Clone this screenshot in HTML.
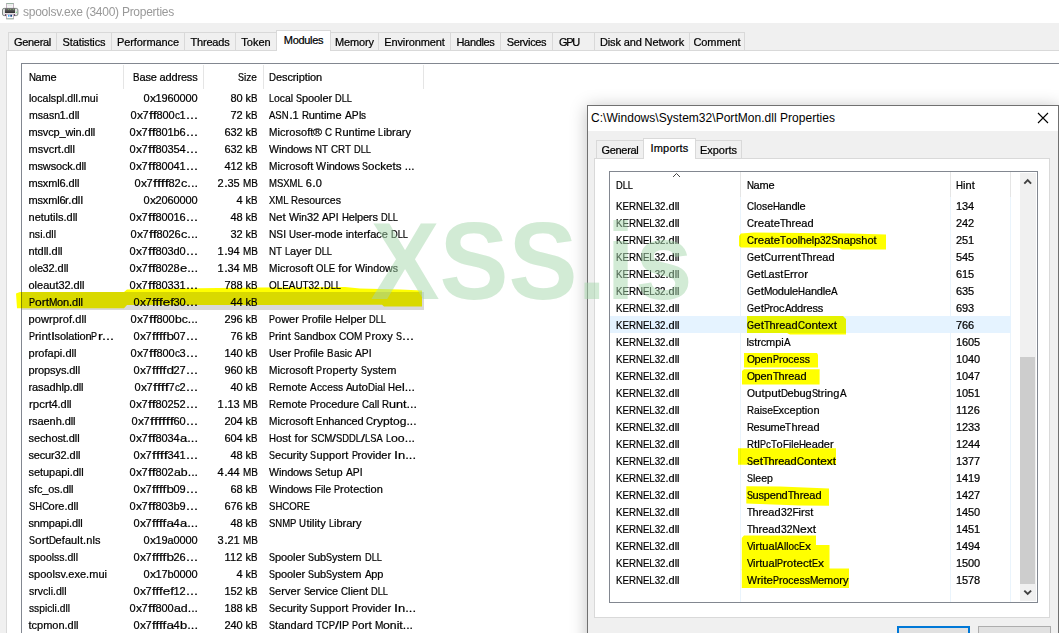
<!DOCTYPE html>
<html lang="en"><head><meta charset="utf-8"><title>spoolsv.exe (3400) Properties</title>
<style>

html,body{margin:0;padding:0}
body{width:1059px;height:633px;overflow:hidden;position:relative;background:#f0f0f0;font-family:"Liberation Sans",sans-serif;font-size:11px;color:#000;}
.a{position:absolute;white-space:nowrap}
.t{position:absolute;white-space:pre;line-height:17px;height:17px;letter-spacing:-0.2px;-webkit-text-stroke:0.22px #000}
.x{display:inline-block;transform-origin:0 50%;white-space:pre;letter-spacing:0}
.tab{position:absolute;box-sizing:border-box;border:1px solid #d9d9d9;border-bottom:none;background:#f0f0f0;text-align:center;white-space:nowrap;letter-spacing:-0.15px;-webkit-text-stroke:0.22px #000}
.tab.sel{background:#fff;z-index:3}
.hd{position:absolute;width:1px;background:#e5e5e5}

</style></head><body>
<div class="a" style="left:0;top:0;width:1059px;height:23px;background:#fff"></div>
<svg class="a" style="left:2px;top:3px" width="17" height="17" viewBox="0 0 17 17">
<defs><linearGradient id="pb" x1="0" y1="0" x2="0" y2="1"><stop offset="0" stop-color="#7a7a7a"/><stop offset="0.45" stop-color="#555"/><stop offset="1" stop-color="#2e2e2e"/></linearGradient></defs>
<rect x="4.4" y="0.6" width="7.2" height="5.4" fill="#f6f6f6" stroke="#b9a3b6" stroke-width="0.8"/>
<path d="M4.4 0.6 H11.6" stroke="#8db59a" stroke-width="0.8"/>
<path d="M5.8 2.4 H10" stroke="#e2e2e2" stroke-width="0.7"/>
<rect x="0.5" y="5.4" width="15.4" height="7.2" rx="1.6" fill="#e6e6e6" stroke="#77807b" stroke-width="0.9"/>
<rect x="2.9" y="5.1" width="10.1" height="5.1" fill="url(#pb)"/>
<rect x="2.9" y="10.2" width="10.1" height="1" fill="#fafafa"/>
<rect x="6.0" y="6.0" width="0.9" height="0.9" fill="#86c066" opacity="0.85"/><rect x="8.1" y="6.0" width="0.9" height="0.9" fill="#86c066" opacity="0.85"/><rect x="11.1" y="6.0" width="0.9" height="0.9" fill="#86c066" opacity="0.85"/>
<rect x="13.9" y="8.8" width="1.1" height="1.1" fill="#7fe07f"/>
<rect x="4.4" y="11.2" width="7.2" height="4.6" fill="#fff" stroke="#b9a3b6" stroke-width="0.8"/>
<path d="M4.4 15.8 H11.6" stroke="#8db59a" stroke-width="0.8"/>
<rect x="6.0" y="11.8" width="1.5" height="1.9" fill="#3da0f0"/><rect x="8.3" y="11.8" width="1.8" height="1.9" fill="#123f78"/>
<rect x="3.2" y="11.2" width="0.8" height="1.4" fill="#300030"/><rect x="12" y="11.2" width="0.8" height="1.4" fill="#300030"/>
</svg>
<div class="a" style="left:23px;top:4px;font-size:12px;line-height:16px;color:#999;letter-spacing:-0.26px">spoolsv.exe (3400) Properties</div>
<div class="a" style="left:6px;top:50px;width:1100px;height:700px;box-sizing:border-box;border:1px solid #d9d9d9;background:#fff"></div>
<div class="tab" style="left:8px;top:32px;width:49px;height:18px;line-height:18px;letter-spacing:-0.306px">General</div>
<div class="tab" style="left:56px;top:32px;width:56px;height:18px;line-height:18px;letter-spacing:-0.102px">Statistics</div>
<div class="tab" style="left:111px;top:32px;width:74px;height:18px;line-height:18px;letter-spacing:-0.089px">Performance</div>
<div class="tab" style="left:184px;top:32px;width:52px;height:18px;line-height:18px;letter-spacing:-0.194px">Threads</div>
<div class="tab" style="left:235px;top:32px;width:42px;height:18px;line-height:18px;letter-spacing:0.028px">Token</div>
<div class="tab sel" style="left:276px;top:30px;width:55px;height:21px;line-height:19px;letter-spacing:-0.311px">Modules</div>
<div class="tab" style="left:330px;top:32px;width:49px;height:18px;line-height:18px;letter-spacing:-0.139px">Memory</div>
<div class="tab" style="left:378px;top:32px;width:73px;height:18px;line-height:18px;letter-spacing:-0.115px">Environment</div>
<div class="tab" style="left:450px;top:32px;width:51px;height:18px;line-height:18px;letter-spacing:-0.337px">Handles</div>
<div class="tab" style="left:500px;top:32px;width:53px;height:18px;line-height:18px;letter-spacing:-0.336px">Services</div>
<div class="tab" style="left:552px;top:32px;width:43px;height:18px;line-height:18px;text-align:left;padding-left:6px;letter-spacing:-1.281px">GPU</div>
<div class="tab" style="left:594px;top:32px;width:96px;height:18px;line-height:18px;letter-spacing:-0.138px">Disk and Network</div>
<div class="tab" style="left:689px;top:32px;width:56px;height:18px;line-height:18px;letter-spacing:-0.098px">Comment</div>
<div class="a" style="left:21px;top:63px;width:1100px;height:700px;box-sizing:border-box;border:1px solid #828790;background:#fff"></div>
<div class="hd" style="left:123px;top:65px;height:24px"></div>
<div class="hd" style="left:203px;top:65px;height:24px"></div>
<div class="hd" style="left:263px;top:65px;height:24px"></div>
<div class="hd" style="left:423px;top:65px;height:24px"></div>
<div class="t" style="left:28.5px;top:69px;"><span class="x" style="transform:scaleX(0.880);margin-right:-0.95px">N</span><span style="letter-spacing:-0.14px">ame</span></div>
<div class="t" style="right:861.5px;top:69px;"><span class="x" style="transform:scaleX(0.885);margin-right:-0.84px">B</span><span style="letter-spacing:-0.18px">ase address</span></div>
<div class="t" style="right:801.5px;top:69px;"><span class="x" style="transform:scaleX(0.817);margin-right:-1.34px">S</span><span class="x" style="transform:scaleX(0.924);margin-right:-1.06px">ize</span></div>
<div class="t" style="left:269px;top:69px;"><span class="x" style="transform:scaleX(0.880);margin-right:-0.95px">D</span><span style="letter-spacing:-0.11px">escription</span></div>
<div class="t" style="left:28.5px;top:90px;"><span class="x" style="transform:scaleX(0.965);margin-right:-2.53px">localspl.dll.mui</span></div>
<div class="t" style="right:861.5px;top:90px;"><span style="letter-spacing:-0.12px">0</span><span class="x" style="transform:scaleX(1.091);margin-right:0.50px">x</span><span style="letter-spacing:-0.12px">1960000</span></div>
<div class="t" style="right:801.5px;top:90px;"><span style="letter-spacing:-0.12px">80</span><span style="letter-spacing:-0.03px"> k</span><span class="x" style="transform:scaleX(0.885);margin-right:-0.84px">B</span></div>
<div class="t" style="left:269px;top:90px;"><span class="x" style="transform:scaleX(0.816);margin-right:-1.12px">L</span><span class="x" style="transform:scaleX(0.946);margin-right:-1.25px">ocal </span><span class="x" style="transform:scaleX(0.817);margin-right:-1.34px">S</span><span style="letter-spacing:-0.09px">pooler </span><span class="x" style="transform:scaleX(0.842);margin-right:-3.19px">DLL</span></div>
<div class="t" style="left:28.5px;top:107px;"><span class="x" style="transform:scaleX(0.957);margin-right:-1.41px">msasn</span><span style="letter-spacing:-0.12px">1</span><span style="letter-spacing:-0.02px">.dll</span></div>
<div class="t" style="right:861.5px;top:107px;"><span style="letter-spacing:-0.12px">0</span><span class="x" style="transform:scaleX(1.091);margin-right:0.50px">x</span><span style="letter-spacing:-0.12px">7</span><span class="x" style="transform:scaleX(1.351);margin-right:2.08px">ff</span><span style="letter-spacing:-0.12px">800</span><span class="x" style="transform:scaleX(0.909);margin-right:-0.50px">c</span><span style="letter-spacing:-0.12px">1</span><span class="x" style="transform:scaleX(1.308);margin-right:2.83px">...</span></div>
<div class="t" style="right:801.5px;top:107px;"><span style="letter-spacing:-0.12px">72</span><span style="letter-spacing:-0.03px"> k</span><span class="x" style="transform:scaleX(0.885);margin-right:-0.84px">B</span></div>
<div class="t" style="left:269px;top:107px;"><span class="x" style="transform:scaleX(0.866);margin-right:-3.02px">ASN</span><span class="x" style="transform:scaleX(1.306);margin-right:0.94px">.</span><span style="letter-spacing:-0.12px">1</span><span style="letter-spacing:-0.06px"> </span><span class="x" style="transform:scaleX(0.880);margin-right:-0.95px">R</span><span style="letter-spacing:-0.01px">untime </span><span class="x" style="transform:scaleX(0.936);margin-right:-1.13px">API</span><span class="x" style="transform:scaleX(0.909);margin-right:-0.50px">s</span></div>
<div class="t" style="left:28.5px;top:124px;"><span style="letter-spacing:-0.15px">msvcp_win.dll</span></div>
<div class="t" style="right:861.5px;top:124px;"><span style="letter-spacing:-0.12px">0</span><span class="x" style="transform:scaleX(1.091);margin-right:0.50px">x</span><span style="letter-spacing:-0.12px">7</span><span class="x" style="transform:scaleX(1.351);margin-right:2.08px">ff</span><span style="letter-spacing:-0.12px">801</span><span style="letter-spacing:-0.12px">b</span><span style="letter-spacing:-0.12px">6</span><span class="x" style="transform:scaleX(1.308);margin-right:2.83px">...</span></div>
<div class="t" style="right:801.5px;top:124px;"><span style="letter-spacing:-0.12px">632</span><span style="letter-spacing:-0.03px"> k</span><span class="x" style="transform:scaleX(0.885);margin-right:-0.84px">B</span></div>
<div class="t" style="left:269px;top:124px;"><span class="x" style="transform:scaleX(0.916);margin-right:-0.77px">M</span><span style="letter-spacing:0.07px">icrosoft</span><span class="x" style="transform:scaleX(1.110);margin-right:0.89px">®</span><span style="letter-spacing:-0.06px"> </span><span class="x" style="transform:scaleX(0.880);margin-right:-0.95px">C</span><span style="letter-spacing:-0.06px"> </span><span class="x" style="transform:scaleX(0.880);margin-right:-0.95px">R</span><span style="letter-spacing:-0.01px">untime </span><span class="x" style="transform:scaleX(0.816);margin-right:-1.12px">L</span><span style="letter-spacing:-0.00px">ibrary</span></div>
<div class="t" style="left:28.5px;top:141px;"><span style="letter-spacing:0.00px">msvcrt.dll</span></div>
<div class="t" style="right:861.5px;top:141px;"><span style="letter-spacing:-0.12px">0</span><span class="x" style="transform:scaleX(1.091);margin-right:0.50px">x</span><span style="letter-spacing:-0.12px">7</span><span class="x" style="transform:scaleX(1.351);margin-right:2.08px">ff</span><span style="letter-spacing:-0.12px">80354</span><span class="x" style="transform:scaleX(1.308);margin-right:2.83px">...</span></div>
<div class="t" style="right:801.5px;top:141px;"><span style="letter-spacing:-0.12px">632</span><span style="letter-spacing:-0.03px"> k</span><span class="x" style="transform:scaleX(0.885);margin-right:-0.84px">B</span></div>
<div class="t" style="left:269px;top:141px;"><span class="x" style="transform:scaleX(0.962);margin-right:-0.39px">W</span><span style="letter-spacing:-0.19px">indows </span><span class="x" style="transform:scaleX(0.886);margin-right:-1.67px">NT</span><span style="letter-spacing:-0.06px"> </span><span class="x" style="transform:scaleX(0.892);margin-right:-2.42px">CRT</span><span style="letter-spacing:-0.06px"> </span><span class="x" style="transform:scaleX(0.842);margin-right:-3.19px">DLL</span></div>
<div class="t" style="left:28.5px;top:158px;"><span style="letter-spacing:-0.16px">mswsock.dll</span></div>
<div class="t" style="right:861.5px;top:158px;"><span style="letter-spacing:-0.12px">0</span><span class="x" style="transform:scaleX(1.091);margin-right:0.50px">x</span><span style="letter-spacing:-0.12px">7</span><span class="x" style="transform:scaleX(1.351);margin-right:2.08px">ff</span><span style="letter-spacing:-0.12px">80041</span><span class="x" style="transform:scaleX(1.308);margin-right:2.83px">...</span></div>
<div class="t" style="right:801.5px;top:158px;"><span style="letter-spacing:-0.12px">412</span><span style="letter-spacing:-0.03px"> k</span><span class="x" style="transform:scaleX(0.885);margin-right:-0.84px">B</span></div>
<div class="t" style="left:269px;top:158px;"><span class="x" style="transform:scaleX(0.916);margin-right:-0.77px">M</span><span style="letter-spacing:0.05px">icrosoft </span><span class="x" style="transform:scaleX(0.962);margin-right:-0.39px">W</span><span style="letter-spacing:-0.19px">indows </span><span class="x" style="transform:scaleX(0.817);margin-right:-1.34px">S</span><span class="x" style="transform:scaleX(1.056);margin-right:2.47px">ockets ...</span></div>
<div class="t" style="left:28.5px;top:175px;"><span style="letter-spacing:-0.16px">msxml</span><span style="letter-spacing:-0.12px">6</span><span style="letter-spacing:-0.02px">.dll</span></div>
<div class="t" style="right:861.5px;top:175px;"><span style="letter-spacing:-0.12px">0</span><span class="x" style="transform:scaleX(1.091);margin-right:0.50px">x</span><span style="letter-spacing:-0.12px">7</span><span class="x" style="transform:scaleX(1.374);margin-right:4.36px">ffff</span><span style="letter-spacing:-0.12px">82</span><span class="x" style="transform:scaleX(1.159);margin-right:2.33px">c...</span></div>
<div class="t" style="right:801.5px;top:175px;"><span style="letter-spacing:-0.12px">2</span><span class="x" style="transform:scaleX(1.306);margin-right:0.94px">.</span><span style="letter-spacing:-0.12px">35</span><span style="letter-spacing:-0.06px"> </span><span class="x" style="transform:scaleX(0.903);margin-right:-1.60px">MB</span></div>
<div class="t" style="left:269px;top:175px;"><span class="x" style="transform:scaleX(0.864);margin-right:-5.33px">MSXML</span><span style="letter-spacing:-0.06px"> </span><span style="letter-spacing:-0.12px">6</span><span class="x" style="transform:scaleX(1.306);margin-right:0.94px">.</span><span style="letter-spacing:-0.12px">0</span></div>
<div class="t" style="left:28.5px;top:192px;"><span style="letter-spacing:-0.16px">msxml</span><span style="letter-spacing:-0.12px">6</span><span class="x" style="transform:scaleX(1.051);margin-right:0.88px">r.dll</span></div>
<div class="t" style="right:861.5px;top:192px;"><span style="letter-spacing:-0.12px">0</span><span class="x" style="transform:scaleX(1.091);margin-right:0.50px">x</span><span style="letter-spacing:-0.12px">2060000</span></div>
<div class="t" style="right:801.5px;top:192px;"><span style="letter-spacing:-0.12px">4</span><span style="letter-spacing:-0.03px"> k</span><span class="x" style="transform:scaleX(0.885);margin-right:-0.84px">B</span></div>
<div class="t" style="left:269px;top:192px;"><span class="x" style="transform:scaleX(0.857);margin-right:-3.23px">XML</span><span style="letter-spacing:-0.06px"> </span><span class="x" style="transform:scaleX(0.880);margin-right:-0.95px">R</span><span class="x" style="transform:scaleX(0.963);margin-right:-1.64px">esources</span></div>
<div class="t" style="left:28.5px;top:209px;"><span style="letter-spacing:0.01px">netutils.dll</span></div>
<div class="t" style="right:861.5px;top:209px;"><span style="letter-spacing:-0.12px">0</span><span class="x" style="transform:scaleX(1.091);margin-right:0.50px">x</span><span style="letter-spacing:-0.12px">7</span><span class="x" style="transform:scaleX(1.351);margin-right:2.08px">ff</span><span style="letter-spacing:-0.12px">80016</span><span class="x" style="transform:scaleX(1.308);margin-right:2.83px">...</span></div>
<div class="t" style="right:801.5px;top:209px;"><span style="letter-spacing:-0.12px">48</span><span style="letter-spacing:-0.03px"> k</span><span class="x" style="transform:scaleX(0.885);margin-right:-0.84px">B</span></div>
<div class="t" style="left:269px;top:209px;"><span class="x" style="transform:scaleX(0.880);margin-right:-0.95px">N</span><span class="x" style="transform:scaleX(1.063);margin-right:0.77px">et </span><span class="x" style="transform:scaleX(0.962);margin-right:-0.39px">W</span><span class="x" style="transform:scaleX(0.934);margin-right:-0.56px">in</span><span style="letter-spacing:-0.12px">32</span><span style="letter-spacing:-0.06px"> </span><span class="x" style="transform:scaleX(0.936);margin-right:-1.13px">API</span><span style="letter-spacing:-0.06px"> </span><span class="x" style="transform:scaleX(0.880);margin-right:-0.95px">H</span><span style="letter-spacing:-0.15px">elpers </span><span class="x" style="transform:scaleX(0.842);margin-right:-3.19px">DLL</span></div>
<div class="t" style="left:28.5px;top:226px;"><span class="x" style="transform:scaleX(0.960);margin-right:-1.12px">nsi.dll</span></div>
<div class="t" style="right:861.5px;top:226px;"><span style="letter-spacing:-0.12px">0</span><span class="x" style="transform:scaleX(1.091);margin-right:0.50px">x</span><span style="letter-spacing:-0.12px">7</span><span class="x" style="transform:scaleX(1.351);margin-right:2.08px">ff</span><span style="letter-spacing:-0.12px">8026</span><span class="x" style="transform:scaleX(1.159);margin-right:2.33px">c...</span></div>
<div class="t" style="right:801.5px;top:226px;"><span style="letter-spacing:-0.12px">32</span><span style="letter-spacing:-0.03px"> k</span><span class="x" style="transform:scaleX(0.885);margin-right:-0.84px">B</span></div>
<div class="t" style="left:269px;top:226px;"><span class="x" style="transform:scaleX(0.927);margin-right:-1.34px">NSI</span><span style="letter-spacing:-0.06px"> </span><span class="x" style="transform:scaleX(0.880);margin-right:-0.95px">U</span><span style="letter-spacing:0.01px">ser-mode interface </span><span class="x" style="transform:scaleX(0.842);margin-right:-3.19px">DLL</span></div>
<div class="t" style="left:28.5px;top:243px;"><span style="letter-spacing:-0.03px">ntdll.dll</span></div>
<div class="t" style="right:861.5px;top:243px;"><span style="letter-spacing:-0.12px">0</span><span class="x" style="transform:scaleX(1.091);margin-right:0.50px">x</span><span style="letter-spacing:-0.12px">7</span><span class="x" style="transform:scaleX(1.351);margin-right:2.08px">ff</span><span style="letter-spacing:-0.12px">803</span><span style="letter-spacing:-0.12px">d</span><span style="letter-spacing:-0.12px">0</span><span class="x" style="transform:scaleX(1.308);margin-right:2.83px">...</span></div>
<div class="t" style="right:801.5px;top:243px;"><span style="letter-spacing:-0.12px">1</span><span class="x" style="transform:scaleX(1.306);margin-right:0.94px">.</span><span style="letter-spacing:-0.12px">94</span><span style="letter-spacing:-0.06px"> </span><span class="x" style="transform:scaleX(0.903);margin-right:-1.60px">MB</span></div>
<div class="t" style="left:269px;top:243px;"><span class="x" style="transform:scaleX(0.886);margin-right:-1.67px">NT</span><span style="letter-spacing:-0.06px"> </span><span class="x" style="transform:scaleX(0.816);margin-right:-1.12px">L</span><span style="letter-spacing:0.01px">ayer </span><span class="x" style="transform:scaleX(0.842);margin-right:-3.19px">DLL</span></div>
<div class="t" style="left:28.5px;top:260px;"><span class="x" style="transform:scaleX(0.953);margin-right:-0.69px">ole</span><span style="letter-spacing:-0.12px">32</span><span style="letter-spacing:-0.02px">.dll</span></div>
<div class="t" style="right:861.5px;top:260px;"><span style="letter-spacing:-0.12px">0</span><span class="x" style="transform:scaleX(1.091);margin-right:0.50px">x</span><span style="letter-spacing:-0.12px">7</span><span class="x" style="transform:scaleX(1.351);margin-right:2.08px">ff</span><span style="letter-spacing:-0.12px">8028</span><span class="x" style="transform:scaleX(1.177);margin-right:2.70px">e...</span></div>
<div class="t" style="right:801.5px;top:260px;"><span style="letter-spacing:-0.12px">1</span><span class="x" style="transform:scaleX(1.306);margin-right:0.94px">.</span><span style="letter-spacing:-0.12px">34</span><span style="letter-spacing:-0.06px"> </span><span class="x" style="transform:scaleX(0.903);margin-right:-1.60px">MB</span></div>
<div class="t" style="left:269px;top:260px;"><span class="x" style="transform:scaleX(0.916);margin-right:-0.77px">M</span><span style="letter-spacing:0.05px">icrosoft </span><span class="x" style="transform:scaleX(0.863);margin-right:-3.02px">OLE</span><span class="x" style="transform:scaleX(1.055);margin-right:1.05px"> for </span><span class="x" style="transform:scaleX(0.962);margin-right:-0.39px">W</span><span class="x" style="transform:scaleX(0.964);margin-right:-1.25px">indows</span></div>
<div class="t" style="left:28.5px;top:277px;"><span style="letter-spacing:0.00px">oleaut</span><span style="letter-spacing:-0.12px">32</span><span style="letter-spacing:-0.02px">.dll</span></div>
<div class="t" style="right:861.5px;top:277px;"><span style="letter-spacing:-0.12px">0</span><span class="x" style="transform:scaleX(1.091);margin-right:0.50px">x</span><span style="letter-spacing:-0.12px">7</span><span class="x" style="transform:scaleX(1.351);margin-right:2.08px">ff</span><span style="letter-spacing:-0.12px">80331</span><span class="x" style="transform:scaleX(1.308);margin-right:2.83px">...</span></div>
<div class="t" style="right:801.5px;top:277px;"><span style="letter-spacing:-0.12px">788</span><span style="letter-spacing:-0.03px"> k</span><span class="x" style="transform:scaleX(0.885);margin-right:-0.84px">B</span></div>
<div class="t" style="left:269px;top:277px;"><span class="x" style="transform:scaleX(0.900);margin-right:-5.65px">OLEAUT32</span><span class="x" style="transform:scaleX(1.306);margin-right:0.94px">.</span><span class="x" style="transform:scaleX(0.842);margin-right:-3.19px">DLL</span></div>
<div class="a" style="left:22px;top:292px;width:402px;height:18px;background:#d9d9d9"></div>
<div class="t" style="left:28.5px;top:294px;"><span class="x" style="transform:scaleX(0.817);margin-right:-1.34px">P</span><span class="x" style="transform:scaleX(1.090);margin-right:1.16px">ort</span><span class="x" style="transform:scaleX(0.916);margin-right:-0.77px">M</span><span style="letter-spacing:-0.05px">on.dll</span></div>
<div class="t" style="right:861.5px;top:294px;"><span style="letter-spacing:-0.12px">0</span><span class="x" style="transform:scaleX(1.091);margin-right:0.50px">x</span><span style="letter-spacing:-0.12px">7</span><span class="x" style="transform:scaleX(1.225);margin-right:4.05px">fffef</span><span style="letter-spacing:-0.12px">30</span><span class="x" style="transform:scaleX(1.308);margin-right:2.83px">...</span></div>
<div class="t" style="right:801.5px;top:294px;"><span style="letter-spacing:-0.12px">44</span><span style="letter-spacing:-0.03px"> k</span><span class="x" style="transform:scaleX(0.885);margin-right:-0.84px">B</span></div>
<div class="t" style="left:28.5px;top:311px;"><span style="letter-spacing:0.10px">powrprof.dll</span></div>
<div class="t" style="right:861.5px;top:311px;"><span style="letter-spacing:-0.12px">0</span><span class="x" style="transform:scaleX(1.091);margin-right:0.50px">x</span><span style="letter-spacing:-0.12px">7</span><span class="x" style="transform:scaleX(1.351);margin-right:2.08px">ff</span><span style="letter-spacing:-0.12px">800</span><span class="x" style="transform:scaleX(1.106);margin-right:2.20px">bc...</span></div>
<div class="t" style="right:801.5px;top:311px;"><span style="letter-spacing:-0.12px">296</span><span style="letter-spacing:-0.03px"> k</span><span class="x" style="transform:scaleX(0.885);margin-right:-0.84px">B</span></div>
<div class="t" style="left:269px;top:311px;"><span class="x" style="transform:scaleX(0.817);margin-right:-1.34px">P</span><span style="letter-spacing:0.02px">ower </span><span class="x" style="transform:scaleX(0.817);margin-right:-1.34px">P</span><span style="letter-spacing:0.01px">rofile </span><span class="x" style="transform:scaleX(0.880);margin-right:-0.95px">H</span><span style="letter-spacing:-0.09px">elper </span><span class="x" style="transform:scaleX(0.842);margin-right:-3.19px">DLL</span></div>
<div class="t" style="left:28.5px;top:328px;"><span class="x" style="transform:scaleX(0.817);margin-right:-1.34px">P</span><span class="x" style="transform:scaleX(1.047);margin-right:0.72px">rint</span><span class="x" style="transform:scaleX(1.306);margin-right:0.94px">I</span><span style="letter-spacing:-0.12px">solation</span><span class="x" style="transform:scaleX(0.817);margin-right:-1.34px">P</span><span class="x" style="transform:scaleX(1.308);margin-right:3.77px">r...</span></div>
<div class="t" style="right:861.5px;top:328px;"><span style="letter-spacing:-0.12px">0</span><span class="x" style="transform:scaleX(1.091);margin-right:0.50px">x</span><span style="letter-spacing:-0.12px">7</span><span class="x" style="transform:scaleX(1.239);margin-right:4.25px">ffffb</span><span style="letter-spacing:-0.12px">07</span><span class="x" style="transform:scaleX(1.308);margin-right:2.83px">...</span></div>
<div class="t" style="right:801.5px;top:328px;"><span style="letter-spacing:-0.12px">76</span><span style="letter-spacing:-0.03px"> k</span><span class="x" style="transform:scaleX(0.885);margin-right:-0.84px">B</span></div>
<div class="t" style="left:269px;top:328px;"><span class="x" style="transform:scaleX(0.817);margin-right:-1.34px">P</span><span class="x" style="transform:scaleX(1.036);margin-right:0.66px">rint </span><span class="x" style="transform:scaleX(0.817);margin-right:-1.34px">S</span><span style="letter-spacing:-0.02px">andbox </span><span class="x" style="transform:scaleX(0.912);margin-right:-2.27px">COM</span><span style="letter-spacing:-0.06px"> </span><span class="x" style="transform:scaleX(0.817);margin-right:-1.34px">P</span><span style="letter-spacing:0.13px">roxy </span><span class="x" style="transform:scaleX(0.817);margin-right:-1.34px">S</span><span class="x" style="transform:scaleX(1.308);margin-right:2.83px">...</span></div>
<div class="t" style="left:28.5px;top:345px;"><span style="letter-spacing:0.03px">profapi.dll</span></div>
<div class="t" style="right:861.5px;top:345px;"><span style="letter-spacing:-0.12px">0</span><span class="x" style="transform:scaleX(1.091);margin-right:0.50px">x</span><span style="letter-spacing:-0.12px">7</span><span class="x" style="transform:scaleX(1.351);margin-right:2.08px">ff</span><span style="letter-spacing:-0.12px">800</span><span class="x" style="transform:scaleX(0.909);margin-right:-0.50px">c</span><span style="letter-spacing:-0.12px">3</span><span class="x" style="transform:scaleX(1.308);margin-right:2.83px">...</span></div>
<div class="t" style="right:801.5px;top:345px;"><span style="letter-spacing:-0.12px">140</span><span style="letter-spacing:-0.03px"> k</span><span class="x" style="transform:scaleX(0.885);margin-right:-0.84px">B</span></div>
<div class="t" style="left:269px;top:345px;"><span class="x" style="transform:scaleX(0.880);margin-right:-0.95px">U</span><span style="letter-spacing:-0.09px">ser </span><span class="x" style="transform:scaleX(0.817);margin-right:-1.34px">P</span><span style="letter-spacing:0.01px">rofile </span><span class="x" style="transform:scaleX(0.885);margin-right:-0.84px">B</span><span class="x" style="transform:scaleX(0.928);margin-right:-1.62px">asic </span><span class="x" style="transform:scaleX(0.936);margin-right:-1.13px">API</span></div>
<div class="t" style="left:28.5px;top:362px;"><span style="letter-spacing:-0.10px">propsys.dll</span></div>
<div class="t" style="right:861.5px;top:362px;"><span style="letter-spacing:-0.12px">0</span><span class="x" style="transform:scaleX(1.091);margin-right:0.50px">x</span><span style="letter-spacing:-0.12px">7</span><span class="x" style="transform:scaleX(1.239);margin-right:4.25px">ffffd</span><span style="letter-spacing:-0.12px">27</span><span class="x" style="transform:scaleX(1.308);margin-right:2.83px">...</span></div>
<div class="t" style="right:801.5px;top:362px;"><span style="letter-spacing:-0.12px">960</span><span style="letter-spacing:-0.03px"> k</span><span class="x" style="transform:scaleX(0.885);margin-right:-0.84px">B</span></div>
<div class="t" style="left:269px;top:362px;"><span class="x" style="transform:scaleX(0.916);margin-right:-0.77px">M</span><span style="letter-spacing:0.05px">icrosoft </span><span class="x" style="transform:scaleX(0.817);margin-right:-1.34px">P</span><span style="letter-spacing:0.15px">roperty </span><span class="x" style="transform:scaleX(0.817);margin-right:-1.34px">S</span><span style="letter-spacing:0.03px">ystem</span></div>
<div class="t" style="left:28.5px;top:379px;"><span style="letter-spacing:-0.11px">rasadhlp.dll</span></div>
<div class="t" style="right:861.5px;top:379px;"><span style="letter-spacing:-0.12px">0</span><span class="x" style="transform:scaleX(1.091);margin-right:0.50px">x</span><span style="letter-spacing:-0.12px">7</span><span class="x" style="transform:scaleX(1.374);margin-right:4.36px">ffff</span><span style="letter-spacing:-0.12px">7</span><span class="x" style="transform:scaleX(0.909);margin-right:-0.50px">c</span><span style="letter-spacing:-0.12px">2</span><span class="x" style="transform:scaleX(1.308);margin-right:2.83px">...</span></div>
<div class="t" style="right:801.5px;top:379px;"><span style="letter-spacing:-0.12px">40</span><span style="letter-spacing:-0.03px"> k</span><span class="x" style="transform:scaleX(0.885);margin-right:-0.84px">B</span></div>
<div class="t" style="left:269px;top:379px;"><span class="x" style="transform:scaleX(0.880);margin-right:-0.95px">R</span><span style="letter-spacing:0.06px">emote </span><span class="x" style="transform:scaleX(0.899);margin-right:-0.74px">A</span><span class="x" style="transform:scaleX(0.930);margin-right:-2.19px">ccess </span><span class="x" style="transform:scaleX(0.899);margin-right:-0.74px">A</span><span class="x" style="transform:scaleX(1.046);margin-right:0.70px">uto</span><span class="x" style="transform:scaleX(0.880);margin-right:-0.95px">D</span><span class="x" style="transform:scaleX(0.924);margin-right:-1.06px">ial </span><span class="x" style="transform:scaleX(0.880);margin-right:-0.95px">H</span><span class="x" style="transform:scaleX(1.128);margin-right:2.27px">el...</span></div>
<div class="t" style="left:28.5px;top:396px;"><span class="x" style="transform:scaleX(1.045);margin-right:1.00px">rpcrt</span><span style="letter-spacing:-0.12px">4</span><span style="letter-spacing:-0.02px">.dll</span></div>
<div class="t" style="right:861.5px;top:396px;"><span style="letter-spacing:-0.12px">0</span><span class="x" style="transform:scaleX(1.091);margin-right:0.50px">x</span><span style="letter-spacing:-0.12px">7</span><span class="x" style="transform:scaleX(1.351);margin-right:2.08px">ff</span><span style="letter-spacing:-0.12px">80252</span><span class="x" style="transform:scaleX(1.308);margin-right:2.83px">...</span></div>
<div class="t" style="right:801.5px;top:396px;"><span style="letter-spacing:-0.12px">1</span><span class="x" style="transform:scaleX(1.306);margin-right:0.94px">.</span><span style="letter-spacing:-0.12px">13</span><span style="letter-spacing:-0.06px"> </span><span class="x" style="transform:scaleX(0.903);margin-right:-1.60px">MB</span></div>
<div class="t" style="left:269px;top:396px;"><span class="x" style="transform:scaleX(0.880);margin-right:-0.95px">R</span><span style="letter-spacing:0.06px">emote </span><span class="x" style="transform:scaleX(0.817);margin-right:-1.34px">P</span><span style="letter-spacing:-0.05px">rocedure </span><span class="x" style="transform:scaleX(0.880);margin-right:-0.95px">C</span><span class="x" style="transform:scaleX(0.924);margin-right:-1.06px">all </span><span class="x" style="transform:scaleX(0.880);margin-right:-0.95px">R</span><span class="x" style="transform:scaleX(1.144);margin-right:3.53px">unt...</span></div>
<div class="t" style="left:28.5px;top:413px;"><span style="letter-spacing:-0.07px">rsaenh.dll</span></div>
<div class="t" style="right:861.5px;top:413px;"><span style="letter-spacing:-0.12px">0</span><span class="x" style="transform:scaleX(1.091);margin-right:0.50px">x</span><span style="letter-spacing:-0.12px">7</span><span class="x" style="transform:scaleX(1.384);margin-right:6.66px">ffffff</span><span style="letter-spacing:-0.12px">60</span><span class="x" style="transform:scaleX(1.308);margin-right:2.83px">...</span></div>
<div class="t" style="right:801.5px;top:413px;"><span style="letter-spacing:-0.12px">204</span><span style="letter-spacing:-0.03px"> k</span><span class="x" style="transform:scaleX(0.885);margin-right:-0.84px">B</span></div>
<div class="t" style="left:269px;top:413px;"><span class="x" style="transform:scaleX(0.916);margin-right:-0.77px">M</span><span style="letter-spacing:0.05px">icrosoft </span><span class="x" style="transform:scaleX(0.817);margin-right:-1.34px">E</span><span style="letter-spacing:-0.16px">nhanced </span><span class="x" style="transform:scaleX(0.880);margin-right:-0.95px">C</span><span class="x" style="transform:scaleX(1.094);margin-right:3.75px">ryptog...</span></div>
<div class="t" style="left:28.5px;top:430px;"><span style="letter-spacing:-0.09px">sechost.dll</span></div>
<div class="t" style="right:861.5px;top:430px;"><span style="letter-spacing:-0.12px">0</span><span class="x" style="transform:scaleX(1.091);margin-right:0.50px">x</span><span style="letter-spacing:-0.12px">7</span><span class="x" style="transform:scaleX(1.351);margin-right:2.08px">ff</span><span style="letter-spacing:-0.12px">8034</span><span class="x" style="transform:scaleX(1.177);margin-right:2.70px">a...</span></div>
<div class="t" style="right:801.5px;top:430px;"><span style="letter-spacing:-0.12px">604</span><span style="letter-spacing:-0.03px"> k</span><span class="x" style="transform:scaleX(0.885);margin-right:-0.84px">B</span></div>
<div class="t" style="left:269px;top:430px;"><span class="x" style="transform:scaleX(0.880);margin-right:-0.95px">H</span><span class="x" style="transform:scaleX(1.041);margin-right:1.38px">ost for </span><span class="x" style="transform:scaleX(0.875);margin-right:-3.05px">SCM</span><span class="x" style="transform:scaleX(1.306);margin-right:0.94px">/</span><span class="x" style="transform:scaleX(0.852);margin-right:-4.34px">SDDL</span><span class="x" style="transform:scaleX(1.306);margin-right:0.94px">/</span><span class="x" style="transform:scaleX(0.846);margin-right:-3.20px">LSA</span><span style="letter-spacing:-0.06px"> </span><span class="x" style="transform:scaleX(0.816);margin-right:-1.12px">L</span><span class="x" style="transform:scaleX(1.121);margin-right:2.59px">oo...</span></div>
<div class="t" style="left:28.5px;top:447px;"><span style="letter-spacing:-0.18px">secur</span><span style="letter-spacing:-0.12px">32</span><span style="letter-spacing:-0.02px">.dll</span></div>
<div class="t" style="right:861.5px;top:447px;"><span style="letter-spacing:-0.12px">0</span><span class="x" style="transform:scaleX(1.091);margin-right:0.50px">x</span><span style="letter-spacing:-0.12px">7</span><span class="x" style="transform:scaleX(1.374);margin-right:4.36px">ffff</span><span style="letter-spacing:-0.12px">341</span><span class="x" style="transform:scaleX(1.308);margin-right:2.83px">...</span></div>
<div class="t" style="right:801.5px;top:447px;"><span style="letter-spacing:-0.12px">48</span><span style="letter-spacing:-0.03px"> k</span><span class="x" style="transform:scaleX(0.885);margin-right:-0.84px">B</span></div>
<div class="t" style="left:269px;top:447px;"><span class="x" style="transform:scaleX(0.817);margin-right:-1.34px">S</span><span style="letter-spacing:0.00px">ecurity </span><span class="x" style="transform:scaleX(0.817);margin-right:-1.34px">S</span><span style="letter-spacing:0.11px">upport </span><span class="x" style="transform:scaleX(0.817);margin-right:-1.34px">P</span><span style="letter-spacing:-0.02px">rovider </span><span class="x" style="transform:scaleX(1.306);margin-right:0.94px">I</span><span class="x" style="transform:scaleX(1.177);margin-right:2.70px">n...</span></div>
<div class="t" style="left:28.5px;top:464px;"><span style="letter-spacing:-0.05px">setupapi.dll</span></div>
<div class="t" style="right:861.5px;top:464px;"><span style="letter-spacing:-0.12px">0</span><span class="x" style="transform:scaleX(1.091);margin-right:0.50px">x</span><span style="letter-spacing:-0.12px">7</span><span class="x" style="transform:scaleX(1.351);margin-right:2.08px">ff</span><span style="letter-spacing:-0.12px">802</span><span class="x" style="transform:scaleX(1.121);margin-right:2.59px">ab...</span></div>
<div class="t" style="right:801.5px;top:464px;"><span style="letter-spacing:-0.12px">4</span><span class="x" style="transform:scaleX(1.306);margin-right:0.94px">.</span><span style="letter-spacing:-0.12px">44</span><span style="letter-spacing:-0.06px"> </span><span class="x" style="transform:scaleX(0.903);margin-right:-1.60px">MB</span></div>
<div class="t" style="left:269px;top:464px;"><span class="x" style="transform:scaleX(0.962);margin-right:-0.39px">W</span><span style="letter-spacing:-0.19px">indows </span><span class="x" style="transform:scaleX(0.817);margin-right:-1.34px">S</span><span style="letter-spacing:0.11px">etup </span><span class="x" style="transform:scaleX(0.936);margin-right:-1.13px">API</span></div>
<div class="t" style="left:28.5px;top:481px;"><span style="letter-spacing:-0.09px">sfc_os.dll</span></div>
<div class="t" style="right:861.5px;top:481px;"><span style="letter-spacing:-0.12px">0</span><span class="x" style="transform:scaleX(1.091);margin-right:0.50px">x</span><span style="letter-spacing:-0.12px">7</span><span class="x" style="transform:scaleX(1.239);margin-right:4.25px">ffffb</span><span style="letter-spacing:-0.12px">09</span><span class="x" style="transform:scaleX(1.308);margin-right:2.83px">...</span></div>
<div class="t" style="right:801.5px;top:481px;"><span style="letter-spacing:-0.12px">68</span><span style="letter-spacing:-0.03px"> k</span><span class="x" style="transform:scaleX(0.885);margin-right:-0.84px">B</span></div>
<div class="t" style="left:269px;top:481px;"><span class="x" style="transform:scaleX(0.962);margin-right:-0.39px">W</span><span style="letter-spacing:-0.19px">indows </span><span class="x" style="transform:scaleX(0.891);margin-right:-0.73px">F</span><span class="x" style="transform:scaleX(0.924);margin-right:-1.06px">ile </span><span class="x" style="transform:scaleX(0.817);margin-right:-1.34px">P</span><span style="letter-spacing:0.09px">rotection</span></div>
<div class="t" style="left:28.5px;top:498px;"><span class="x" style="transform:scaleX(0.861);margin-right:-3.23px">SHC</span><span style="letter-spacing:0.00px">ore.dll</span></div>
<div class="t" style="right:861.5px;top:498px;"><span style="letter-spacing:-0.12px">0</span><span class="x" style="transform:scaleX(1.091);margin-right:0.50px">x</span><span style="letter-spacing:-0.12px">7</span><span class="x" style="transform:scaleX(1.351);margin-right:2.08px">ff</span><span style="letter-spacing:-0.12px">803</span><span style="letter-spacing:-0.12px">b</span><span style="letter-spacing:-0.12px">9</span><span class="x" style="transform:scaleX(1.308);margin-right:2.83px">...</span></div>
<div class="t" style="right:801.5px;top:498px;"><span style="letter-spacing:-0.12px">676</span><span style="letter-spacing:-0.03px"> k</span><span class="x" style="transform:scaleX(0.885);margin-right:-0.84px">B</span></div>
<div class="t" style="left:269px;top:498px;"><span class="x" style="transform:scaleX(0.871);margin-right:-6.06px">SHCORE</span></div>
<div class="t" style="left:28.5px;top:515px;"><span style="letter-spacing:-0.15px">snmpapi.dll</span></div>
<div class="t" style="right:861.5px;top:515px;"><span style="letter-spacing:-0.12px">0</span><span class="x" style="transform:scaleX(1.091);margin-right:0.50px">x</span><span style="letter-spacing:-0.12px">7</span><span class="x" style="transform:scaleX(1.239);margin-right:4.25px">ffffa</span><span style="letter-spacing:-0.12px">4</span><span class="x" style="transform:scaleX(1.177);margin-right:2.70px">a...</span></div>
<div class="t" style="right:801.5px;top:515px;"><span style="letter-spacing:-0.12px">48</span><span style="letter-spacing:-0.03px"> k</span><span class="x" style="transform:scaleX(0.885);margin-right:-0.84px">B</span></div>
<div class="t" style="left:269px;top:515px;"><span class="x" style="transform:scaleX(0.862);margin-right:-4.38px">SNMP</span><span style="letter-spacing:-0.06px"> </span><span class="x" style="transform:scaleX(0.880);margin-right:-0.95px">U</span><span style="letter-spacing:0.07px">tility </span><span class="x" style="transform:scaleX(0.816);margin-right:-1.12px">L</span><span style="letter-spacing:-0.00px">ibrary</span></div>
<div class="t" style="left:28.5px;top:532px;"><span class="x" style="transform:scaleX(0.817);margin-right:-1.34px">S</span><span class="x" style="transform:scaleX(1.090);margin-right:1.16px">ort</span><span class="x" style="transform:scaleX(0.880);margin-right:-0.95px">D</span><span style="letter-spacing:0.10px">efault.nls</span></div>
<div class="t" style="right:861.5px;top:532px;"><span style="letter-spacing:-0.12px">0</span><span class="x" style="transform:scaleX(1.091);margin-right:0.50px">x</span><span style="letter-spacing:-0.12px">19</span><span style="letter-spacing:-0.12px">a</span><span style="letter-spacing:-0.12px">0000</span></div>
<div class="t" style="right:801.5px;top:532px;"><span style="letter-spacing:-0.12px">3</span><span class="x" style="transform:scaleX(1.306);margin-right:0.94px">.</span><span style="letter-spacing:-0.12px">21</span><span style="letter-spacing:-0.06px"> </span><span class="x" style="transform:scaleX(0.903);margin-right:-1.60px">MB</span></div>
<div class="t" style="left:28.5px;top:549px;"><span class="x" style="transform:scaleX(0.954);margin-right:-2.36px">spoolss.dll</span></div>
<div class="t" style="right:861.5px;top:549px;"><span style="letter-spacing:-0.12px">0</span><span class="x" style="transform:scaleX(1.091);margin-right:0.50px">x</span><span style="letter-spacing:-0.12px">7</span><span class="x" style="transform:scaleX(1.239);margin-right:4.25px">ffffb</span><span style="letter-spacing:-0.12px">26</span><span class="x" style="transform:scaleX(1.308);margin-right:2.83px">...</span></div>
<div class="t" style="right:801.5px;top:549px;"><span style="letter-spacing:0.15px">112</span><span style="letter-spacing:-0.03px"> k</span><span class="x" style="transform:scaleX(0.885);margin-right:-0.84px">B</span></div>
<div class="t" style="left:269px;top:549px;"><span class="x" style="transform:scaleX(0.817);margin-right:-1.34px">S</span><span style="letter-spacing:-0.09px">pooler </span><span class="x" style="transform:scaleX(0.817);margin-right:-1.34px">S</span><span style="letter-spacing:-0.12px">ub</span><span class="x" style="transform:scaleX(0.817);margin-right:-1.34px">S</span><span style="letter-spacing:0.02px">ystem </span><span class="x" style="transform:scaleX(0.842);margin-right:-3.19px">DLL</span></div>
<div class="t" style="left:28.5px;top:566px;"><span style="letter-spacing:0.03px">spoolsv.exe.mui</span></div>
<div class="t" style="right:861.5px;top:566px;"><span style="letter-spacing:-0.12px">0</span><span class="x" style="transform:scaleX(1.091);margin-right:0.50px">x</span><span style="letter-spacing:-0.12px">17</span><span style="letter-spacing:-0.12px">b</span><span style="letter-spacing:-0.12px">0000</span></div>
<div class="t" style="right:801.5px;top:566px;"><span style="letter-spacing:-0.12px">4</span><span style="letter-spacing:-0.03px"> k</span><span class="x" style="transform:scaleX(0.885);margin-right:-0.84px">B</span></div>
<div class="t" style="left:269px;top:566px;"><span class="x" style="transform:scaleX(0.817);margin-right:-1.34px">S</span><span style="letter-spacing:-0.09px">pooler </span><span class="x" style="transform:scaleX(0.817);margin-right:-1.34px">S</span><span style="letter-spacing:-0.12px">ub</span><span class="x" style="transform:scaleX(0.817);margin-right:-1.34px">S</span><span style="letter-spacing:0.02px">ystem </span><span class="x" style="transform:scaleX(0.899);margin-right:-0.74px">A</span><span style="letter-spacing:-0.12px">pp</span></div>
<div class="t" style="left:28.5px;top:583px;"><span class="x" style="transform:scaleX(0.958);margin-right:-1.62px">srvcli.dll</span></div>
<div class="t" style="right:861.5px;top:583px;"><span style="letter-spacing:-0.12px">0</span><span class="x" style="transform:scaleX(1.091);margin-right:0.50px">x</span><span style="letter-spacing:-0.12px">7</span><span class="x" style="transform:scaleX(1.225);margin-right:4.05px">fffef</span><span style="letter-spacing:-0.12px">12</span><span class="x" style="transform:scaleX(1.308);margin-right:2.83px">...</span></div>
<div class="t" style="right:801.5px;top:583px;"><span style="letter-spacing:-0.12px">152</span><span style="letter-spacing:-0.03px"> k</span><span class="x" style="transform:scaleX(0.885);margin-right:-0.84px">B</span></div>
<div class="t" style="left:269px;top:583px;"><span class="x" style="transform:scaleX(0.817);margin-right:-1.34px">S</span><span style="letter-spacing:0.06px">erver </span><span class="x" style="transform:scaleX(0.817);margin-right:-1.34px">S</span><span style="letter-spacing:-0.13px">ervice </span><span class="x" style="transform:scaleX(0.880);margin-right:-0.95px">C</span><span style="letter-spacing:-0.04px">lient </span><span class="x" style="transform:scaleX(0.842);margin-right:-3.19px">DLL</span></div>
<div class="t" style="left:28.5px;top:600px;"><span class="x" style="transform:scaleX(0.931);margin-right:-3.02px">sspicli.dll</span></div>
<div class="t" style="right:861.5px;top:600px;"><span style="letter-spacing:-0.12px">0</span><span class="x" style="transform:scaleX(1.091);margin-right:0.50px">x</span><span style="letter-spacing:-0.12px">7</span><span class="x" style="transform:scaleX(1.351);margin-right:2.08px">ff</span><span style="letter-spacing:-0.12px">800</span><span class="x" style="transform:scaleX(1.121);margin-right:2.59px">ad...</span></div>
<div class="t" style="right:801.5px;top:600px;"><span style="letter-spacing:-0.12px">188</span><span style="letter-spacing:-0.03px"> k</span><span class="x" style="transform:scaleX(0.885);margin-right:-0.84px">B</span></div>
<div class="t" style="left:269px;top:600px;"><span class="x" style="transform:scaleX(0.817);margin-right:-1.34px">S</span><span style="letter-spacing:0.00px">ecurity </span><span class="x" style="transform:scaleX(0.817);margin-right:-1.34px">S</span><span style="letter-spacing:0.11px">upport </span><span class="x" style="transform:scaleX(0.817);margin-right:-1.34px">P</span><span style="letter-spacing:-0.02px">rovider </span><span class="x" style="transform:scaleX(1.306);margin-right:0.94px">I</span><span class="x" style="transform:scaleX(1.177);margin-right:2.70px">n...</span></div>
<div class="t" style="left:28.5px;top:617px;"><span style="letter-spacing:-0.01px">tcpmon.dll</span></div>
<div class="t" style="right:861.5px;top:617px;"><span style="letter-spacing:-0.12px">0</span><span class="x" style="transform:scaleX(1.091);margin-right:0.50px">x</span><span style="letter-spacing:-0.12px">7</span><span class="x" style="transform:scaleX(1.239);margin-right:4.25px">ffffa</span><span style="letter-spacing:-0.12px">4</span><span class="x" style="transform:scaleX(1.177);margin-right:2.70px">b...</span></div>
<div class="t" style="right:801.5px;top:617px;"><span style="letter-spacing:-0.12px">240</span><span style="letter-spacing:-0.03px"> k</span><span class="x" style="transform:scaleX(0.885);margin-right:-0.84px">B</span></div>
<div class="t" style="left:269px;top:617px;"><span class="x" style="transform:scaleX(0.817);margin-right:-1.34px">S</span><span style="letter-spacing:0.08px">tandard </span><span class="x" style="transform:scaleX(0.864);margin-right:-3.00px">TCP</span><span class="x" style="transform:scaleX(1.306);margin-right:0.94px">/</span><span class="x" style="transform:scaleX(0.961);margin-right:-0.41px">IP</span><span style="letter-spacing:-0.06px"> </span><span class="x" style="transform:scaleX(0.817);margin-right:-1.34px">P</span><span class="x" style="transform:scaleX(1.069);margin-right:1.09px">ort </span><span class="x" style="transform:scaleX(0.916);margin-right:-0.77px">M</span><span class="x" style="transform:scaleX(1.115);margin-right:3.09px">onit...</span></div>
<svg class="a" style="left:0;top:280px;mix-blend-mode:multiply" width="440" height="40" viewBox="0 280 440 40">
<polygon points="16,293.5 20,292 124,292 127,289.5 180,288.5 260,287.5 345,287 360,288.5 400,289.5 422,290.5 422,306.5 384,306.5 382,304.8 200,305 127,305 124,308.3 17,308.3" fill="#ffff00"/></svg>
<div class="a" style="left:587px;top:105px;width:472px;height:600px;box-sizing:border-box;border:1px solid #707070;background:#f0f0f0;box-shadow:0 2px 16px rgba(0,0,0,.25)"></div>
<div class="a" style="left:588px;top:106px;width:470px;height:25px;background:#fff"></div>
<div class="a" style="left:591px;top:110px;font-size:12px;line-height:16px;color:#000;letter-spacing:0.03px">C:\Windows\System32\PortMon.dll Properties</div>
<svg class="a" style="left:1037px;top:112px" width="12" height="12" viewBox="0 0 12 12"><path d="M1 1 L11 11 M11 1 L1 11" stroke="#000" stroke-width="1.1" fill="none"/></svg>
<div class="a" style="left:594px;top:158px;width:456px;height:460px;box-sizing:border-box;border:1px solid #d9d9d9;background:#fff"></div>
<div class="tab" style="left:596px;top:140px;width:48px;height:18px;line-height:18px;letter-spacing:-0.306px">General</div>
<div class="tab sel" style="left:643px;top:138px;width:53px;height:21px;line-height:19px;letter-spacing:0.188px">Imports</div>
<div class="tab" style="left:695px;top:140px;width:47px;height:18px;line-height:18px;letter-spacing:-0.042px">Exports</div>
<div class="a" style="left:609px;top:171px;width:429px;height:432px;box-sizing:border-box;border:1px solid #828790;background:#fff"></div>
<div class="hd" style="left:740px;top:172px;height:25px"></div>
<div class="hd" style="left:740px;top:197px;height:405px;background:#eaf4fc"></div>
<div class="hd" style="left:950px;top:172px;height:25px"></div>
<div class="hd" style="left:950px;top:197px;height:405px;background:#eaf4fc"></div>
<div class="hd" style="left:1010px;top:172px;height:25px"></div>
<div class="hd" style="left:1010px;top:197px;height:405px;background:#eaf4fc"></div>
<svg class="a" style="left:672px;top:172px" width="10" height="7" viewBox="0 0 10 7"><path d="M1 5 L4.5 1.5 L8 5" stroke="#444" stroke-width="1" fill="none"/></svg>
<div class="t" style="left:616px;top:177px;"><span class="x" style="transform:scaleX(0.842);margin-right:-3.19px">DLL</span></div>
<div class="t" style="left:746.5px;top:177px;"><span class="x" style="transform:scaleX(0.880);margin-right:-0.95px">N</span><span style="letter-spacing:-0.14px">ame</span></div>
<div class="t" style="left:956px;top:177px;"><span class="x" style="transform:scaleX(0.880);margin-right:-0.95px">H</span><span style="letter-spacing:0.12px">int</span></div>
<div class="a" style="left:610px;top:316px;width:401px;height:17px;background:#e5f3ff"></div>
<div class="t" style="left:616px;top:198px;"><span class="x" style="transform:scaleX(0.880);margin-right:-6.77px">KERNEL32</span><span style="letter-spacing:-0.02px">.dll</span></div>
<div class="t" style="left:746.5px;top:198px;"><span class="x" style="transform:scaleX(0.880);margin-right:-0.95px">C</span><span class="x" style="transform:scaleX(0.941);margin-right:-1.19px">lose</span><span class="x" style="transform:scaleX(0.880);margin-right:-0.95px">H</span><span style="letter-spacing:-0.18px">andle</span></div>
<div class="t" style="left:956px;top:198px;"><span style="letter-spacing:-0.12px">134</span></div>
<div class="t" style="left:616px;top:215px;"><span class="x" style="transform:scaleX(0.880);margin-right:-6.77px">KERNEL32</span><span style="letter-spacing:-0.02px">.dll</span></div>
<div class="t" style="left:746.5px;top:215px;"><span class="x" style="transform:scaleX(0.880);margin-right:-0.95px">C</span><span class="x" style="transform:scaleX(1.037);margin-right:0.92px">reate</span><span class="x" style="transform:scaleX(0.891);margin-right:-0.73px">T</span><span style="letter-spacing:-0.03px">hread</span></div>
<div class="t" style="left:956px;top:215px;"><span style="letter-spacing:-0.12px">242</span></div>
<div class="t" style="left:616px;top:232px;"><span class="x" style="transform:scaleX(0.880);margin-right:-6.77px">KERNEL32</span><span style="letter-spacing:-0.02px">.dll</span></div>
<div class="t" style="left:746.5px;top:232px;"><span class="x" style="transform:scaleX(0.880);margin-right:-0.95px">C</span><span class="x" style="transform:scaleX(1.037);margin-right:0.92px">reate</span><span class="x" style="transform:scaleX(0.891);margin-right:-0.73px">T</span><span class="x" style="transform:scaleX(0.958);margin-right:-1.48px">oolhelp</span><span class="x" style="transform:scaleX(0.919);margin-right:-1.58px">32S</span><span style="letter-spacing:-0.02px">napshot</span></div>
<div class="t" style="left:956px;top:232px;"><span style="letter-spacing:-0.12px">251</span></div>
<div class="t" style="left:616px;top:249px;"><span class="x" style="transform:scaleX(0.880);margin-right:-6.77px">KERNEL32</span><span style="letter-spacing:-0.02px">.dll</span></div>
<div class="t" style="left:746.5px;top:249px;"><span class="x" style="transform:scaleX(0.818);margin-right:-1.56px">G</span><span class="x" style="transform:scaleX(1.088);margin-right:0.81px">et</span><span class="x" style="transform:scaleX(0.880);margin-right:-0.95px">C</span><span class="x" style="transform:scaleX(1.043);margin-right:1.25px">urrent</span><span class="x" style="transform:scaleX(0.891);margin-right:-0.73px">T</span><span style="letter-spacing:-0.03px">hread</span></div>
<div class="t" style="left:956px;top:249px;"><span style="letter-spacing:-0.12px">545</span></div>
<div class="t" style="left:616px;top:266px;"><span class="x" style="transform:scaleX(0.880);margin-right:-6.77px">KERNEL32</span><span style="letter-spacing:-0.02px">.dll</span></div>
<div class="t" style="left:746.5px;top:266px;"><span class="x" style="transform:scaleX(0.818);margin-right:-1.56px">G</span><span class="x" style="transform:scaleX(1.088);margin-right:0.81px">et</span><span class="x" style="transform:scaleX(0.816);margin-right:-1.12px">L</span><span style="letter-spacing:0.10px">ast</span><span class="x" style="transform:scaleX(0.817);margin-right:-1.34px">E</span><span class="x" style="transform:scaleX(1.052);margin-right:0.89px">rror</span></div>
<div class="t" style="left:956px;top:266px;"><span style="letter-spacing:-0.12px">615</span></div>
<div class="t" style="left:616px;top:283px;"><span class="x" style="transform:scaleX(0.880);margin-right:-6.77px">KERNEL32</span><span style="letter-spacing:-0.02px">.dll</span></div>
<div class="t" style="left:746.5px;top:283px;"><span class="x" style="transform:scaleX(0.818);margin-right:-1.56px">G</span><span class="x" style="transform:scaleX(1.088);margin-right:0.81px">et</span><span class="x" style="transform:scaleX(0.916);margin-right:-0.77px">M</span><span style="letter-spacing:-0.18px">odule</span><span class="x" style="transform:scaleX(0.880);margin-right:-0.95px">H</span><span style="letter-spacing:-0.18px">andle</span><span class="x" style="transform:scaleX(0.899);margin-right:-0.74px">A</span></div>
<div class="t" style="left:956px;top:283px;"><span style="letter-spacing:-0.12px">635</span></div>
<div class="t" style="left:616px;top:300px;"><span class="x" style="transform:scaleX(0.880);margin-right:-6.77px">KERNEL32</span><span style="letter-spacing:-0.02px">.dll</span></div>
<div class="t" style="left:746.5px;top:300px;"><span class="x" style="transform:scaleX(0.818);margin-right:-1.56px">G</span><span class="x" style="transform:scaleX(1.088);margin-right:0.81px">et</span><span class="x" style="transform:scaleX(0.817);margin-right:-1.34px">P</span><span style="letter-spacing:-0.09px">roc</span><span class="x" style="transform:scaleX(0.899);margin-right:-0.74px">A</span><span style="letter-spacing:-0.17px">ddress</span></div>
<div class="t" style="left:956px;top:300px;"><span style="letter-spacing:-0.12px">693</span></div>
<div class="t" style="left:616px;top:317px;"><span class="x" style="transform:scaleX(0.880);margin-right:-6.77px">KERNEL32</span><span style="letter-spacing:-0.02px">.dll</span></div>
<div class="t" style="left:746.5px;top:317px;"><span class="x" style="transform:scaleX(0.818);margin-right:-1.56px">G</span><span class="x" style="transform:scaleX(1.088);margin-right:0.81px">et</span><span class="x" style="transform:scaleX(0.891);margin-right:-0.73px">T</span><span style="letter-spacing:-0.03px">hread</span><span class="x" style="transform:scaleX(0.880);margin-right:-0.95px">C</span><span class="x" style="transform:scaleX(1.068);margin-right:2.03px">ontext</span></div>
<div class="t" style="left:956px;top:317px;"><span style="letter-spacing:-0.12px">766</span></div>
<div class="t" style="left:616px;top:334px;"><span class="x" style="transform:scaleX(0.880);margin-right:-6.77px">KERNEL32</span><span style="letter-spacing:-0.02px">.dll</span></div>
<div class="t" style="left:746.5px;top:334px;"><span style="letter-spacing:-0.11px">lstrcmpi</span><span class="x" style="transform:scaleX(0.899);margin-right:-0.74px">A</span></div>
<div class="t" style="left:956px;top:334px;"><span style="letter-spacing:-0.12px">1605</span></div>
<div class="t" style="left:616px;top:351px;"><span class="x" style="transform:scaleX(0.880);margin-right:-6.77px">KERNEL32</span><span style="letter-spacing:-0.02px">.dll</span></div>
<div class="t" style="left:746.5px;top:351px;"><span class="x" style="transform:scaleX(0.934);margin-right:-0.56px">O</span><span style="letter-spacing:-0.12px">pen</span><span class="x" style="transform:scaleX(0.817);margin-right:-1.34px">P</span><span class="x" style="transform:scaleX(0.957);margin-right:-1.41px">rocess</span></div>
<div class="t" style="left:956px;top:351px;"><span style="letter-spacing:-0.12px">1040</span></div>
<div class="t" style="left:616px;top:368px;"><span class="x" style="transform:scaleX(0.880);margin-right:-6.77px">KERNEL32</span><span style="letter-spacing:-0.02px">.dll</span></div>
<div class="t" style="left:746.5px;top:368px;"><span class="x" style="transform:scaleX(0.934);margin-right:-0.56px">O</span><span style="letter-spacing:-0.12px">pen</span><span class="x" style="transform:scaleX(0.891);margin-right:-0.73px">T</span><span style="letter-spacing:-0.03px">hread</span></div>
<div class="t" style="left:956px;top:368px;"><span style="letter-spacing:-0.12px">1047</span></div>
<div class="t" style="left:616px;top:385px;"><span class="x" style="transform:scaleX(0.880);margin-right:-6.77px">KERNEL32</span><span style="letter-spacing:-0.02px">.dll</span></div>
<div class="t" style="left:746.5px;top:385px;"><span class="x" style="transform:scaleX(0.934);margin-right:-0.56px">O</span><span class="x" style="transform:scaleX(1.063);margin-right:1.53px">utput</span><span class="x" style="transform:scaleX(0.880);margin-right:-0.95px">D</span><span style="letter-spacing:-0.12px">ebug</span><span class="x" style="transform:scaleX(0.817);margin-right:-1.34px">S</span><span style="letter-spacing:0.12px">tring</span><span class="x" style="transform:scaleX(0.899);margin-right:-0.74px">A</span></div>
<div class="t" style="left:956px;top:385px;"><span style="letter-spacing:-0.12px">1051</span></div>
<div class="t" style="left:616px;top:402px;"><span class="x" style="transform:scaleX(0.880);margin-right:-6.77px">KERNEL32</span><span style="letter-spacing:-0.02px">.dll</span></div>
<div class="t" style="left:746.5px;top:402px;"><span class="x" style="transform:scaleX(0.880);margin-right:-0.95px">R</span><span class="x" style="transform:scaleX(0.941);margin-right:-1.19px">aise</span><span class="x" style="transform:scaleX(0.817);margin-right:-1.34px">E</span><span style="letter-spacing:0.00px">xception</span></div>
<div class="t" style="left:956px;top:402px;"><span style="letter-spacing:0.09px">1126</span></div>
<div class="t" style="left:616px;top:419px;"><span class="x" style="transform:scaleX(0.880);margin-right:-6.77px">KERNEL32</span><span style="letter-spacing:-0.02px">.dll</span></div>
<div class="t" style="left:746.5px;top:419px;"><span class="x" style="transform:scaleX(0.880);margin-right:-0.95px">R</span><span style="letter-spacing:-0.21px">esume</span><span class="x" style="transform:scaleX(0.891);margin-right:-0.73px">T</span><span style="letter-spacing:-0.03px">hread</span></div>
<div class="t" style="left:956px;top:419px;"><span style="letter-spacing:-0.12px">1233</span></div>
<div class="t" style="left:616px;top:436px;"><span class="x" style="transform:scaleX(0.880);margin-right:-6.77px">KERNEL32</span><span style="letter-spacing:-0.02px">.dll</span></div>
<div class="t" style="left:746.5px;top:436px;"><span class="x" style="transform:scaleX(0.880);margin-right:-0.95px">R</span><span class="x" style="transform:scaleX(1.091);margin-right:0.50px">tl</span><span class="x" style="transform:scaleX(0.817);margin-right:-1.34px">P</span><span class="x" style="transform:scaleX(0.909);margin-right:-0.50px">c</span><span class="x" style="transform:scaleX(0.891);margin-right:-0.73px">T</span><span style="letter-spacing:-0.12px">o</span><span class="x" style="transform:scaleX(0.891);margin-right:-0.73px">F</span><span class="x" style="transform:scaleX(0.908);margin-right:-1.02px">ile</span><span class="x" style="transform:scaleX(0.880);margin-right:-0.95px">H</span><span style="letter-spacing:-0.03px">eader</span></div>
<div class="t" style="left:956px;top:436px;"><span style="letter-spacing:-0.12px">1244</span></div>
<div class="t" style="left:616px;top:453px;"><span class="x" style="transform:scaleX(0.880);margin-right:-6.77px">KERNEL32</span><span style="letter-spacing:-0.02px">.dll</span></div>
<div class="t" style="left:746.5px;top:453px;"><span class="x" style="transform:scaleX(0.817);margin-right:-1.34px">S</span><span class="x" style="transform:scaleX(1.088);margin-right:0.81px">et</span><span class="x" style="transform:scaleX(0.891);margin-right:-0.73px">T</span><span style="letter-spacing:-0.03px">hread</span><span class="x" style="transform:scaleX(0.880);margin-right:-0.95px">C</span><span class="x" style="transform:scaleX(1.068);margin-right:2.03px">ontext</span></div>
<div class="t" style="left:956px;top:453px;"><span style="letter-spacing:-0.12px">1377</span></div>
<div class="t" style="left:616px;top:470px;"><span class="x" style="transform:scaleX(0.880);margin-right:-6.77px">KERNEL32</span><span style="letter-spacing:-0.02px">.dll</span></div>
<div class="t" style="left:746.5px;top:470px;"><span class="x" style="transform:scaleX(0.817);margin-right:-1.34px">S</span><span class="x" style="transform:scaleX(0.962);margin-right:-0.80px">leep</span></div>
<div class="t" style="left:956px;top:470px;"><span style="letter-spacing:-0.12px">1419</span></div>
<div class="t" style="left:616px;top:487px;"><span class="x" style="transform:scaleX(0.880);margin-right:-6.77px">KERNEL32</span><span style="letter-spacing:-0.02px">.dll</span></div>
<div class="t" style="left:746.5px;top:487px;"><span class="x" style="transform:scaleX(0.817);margin-right:-1.34px">S</span><span style="letter-spacing:-0.18px">uspend</span><span class="x" style="transform:scaleX(0.891);margin-right:-0.73px">T</span><span style="letter-spacing:-0.03px">hread</span></div>
<div class="t" style="left:956px;top:487px;"><span style="letter-spacing:-0.12px">1427</span></div>
<div class="t" style="left:616px;top:504px;"><span class="x" style="transform:scaleX(0.880);margin-right:-6.77px">KERNEL32</span><span style="letter-spacing:-0.02px">.dll</span></div>
<div class="t" style="left:746.5px;top:504px;"><span class="x" style="transform:scaleX(0.891);margin-right:-0.73px">T</span><span style="letter-spacing:-0.03px">hread</span><span class="x" style="transform:scaleX(0.949);margin-right:-0.97px">32F</span><span style="letter-spacing:0.08px">irst</span></div>
<div class="t" style="left:956px;top:504px;"><span style="letter-spacing:-0.12px">1450</span></div>
<div class="t" style="left:616px;top:521px;"><span class="x" style="transform:scaleX(0.880);margin-right:-6.77px">KERNEL32</span><span style="letter-spacing:-0.02px">.dll</span></div>
<div class="t" style="left:746.5px;top:521px;"><span class="x" style="transform:scaleX(0.891);margin-right:-0.73px">T</span><span style="letter-spacing:-0.03px">hread</span><span class="x" style="transform:scaleX(0.941);margin-right:-1.19px">32N</span><span class="x" style="transform:scaleX(1.089);margin-right:1.31px">ext</span></div>
<div class="t" style="left:956px;top:521px;"><span style="letter-spacing:-0.12px">1451</span></div>
<div class="t" style="left:616px;top:538px;"><span class="x" style="transform:scaleX(0.880);margin-right:-6.77px">KERNEL32</span><span style="letter-spacing:-0.02px">.dll</span></div>
<div class="t" style="left:746.5px;top:538px;"><span class="x" style="transform:scaleX(0.899);margin-right:-0.74px">V</span><span style="letter-spacing:0.03px">irtual</span><span class="x" style="transform:scaleX(0.899);margin-right:-0.74px">A</span><span class="x" style="transform:scaleX(0.908);margin-right:-1.52px">lloc</span><span class="x" style="transform:scaleX(0.817);margin-right:-1.34px">E</span><span class="x" style="transform:scaleX(1.091);margin-right:0.50px">x</span></div>
<div class="t" style="left:956px;top:538px;"><span style="letter-spacing:-0.12px">1494</span></div>
<div class="t" style="left:616px;top:555px;"><span class="x" style="transform:scaleX(0.880);margin-right:-6.77px">KERNEL32</span><span style="letter-spacing:-0.02px">.dll</span></div>
<div class="t" style="left:746.5px;top:555px;"><span class="x" style="transform:scaleX(0.899);margin-right:-0.74px">V</span><span style="letter-spacing:0.03px">irtual</span><span class="x" style="transform:scaleX(0.817);margin-right:-1.34px">P</span><span class="x" style="transform:scaleX(1.054);margin-right:1.48px">rotect</span><span class="x" style="transform:scaleX(0.817);margin-right:-1.34px">E</span><span class="x" style="transform:scaleX(1.091);margin-right:0.50px">x</span></div>
<div class="t" style="left:956px;top:555px;"><span style="letter-spacing:-0.12px">1500</span></div>
<div class="t" style="left:616px;top:572px;"><span class="x" style="transform:scaleX(0.880);margin-right:-6.77px">KERNEL32</span><span style="letter-spacing:-0.02px">.dll</span></div>
<div class="t" style="left:746.5px;top:572px;"><span class="x" style="transform:scaleX(0.962);margin-right:-0.39px">W</span><span class="x" style="transform:scaleX(1.047);margin-right:0.72px">rite</span><span class="x" style="transform:scaleX(0.817);margin-right:-1.34px">P</span><span class="x" style="transform:scaleX(0.957);margin-right:-1.41px">rocess</span><span class="x" style="transform:scaleX(0.916);margin-right:-0.77px">M</span><span style="letter-spacing:-0.01px">emory</span></div>
<div class="t" style="left:956px;top:572px;"><span style="letter-spacing:-0.12px">1578</span></div>
<div class="a" style="left:1020px;top:173px;width:16px;height:428px;background:#f0f0f0"></div>
<div class="a" style="left:1020px;top:357px;width:15px;height:227px;background:#cdcdcd"></div>
<svg class="a" style="left:1023px;top:178px" width="10" height="7" viewBox="0 0 10 7"><path d="M1.3 5.6 L4.7 2.2 L8.1 5.6" stroke="#404040" stroke-width="1.9" fill="none"/></svg>
<svg class="a" style="left:1023px;top:589px" width="10" height="7" viewBox="0 0 10 7"><path d="M1.3 1.6 L4.7 5 L8.1 1.6" stroke="#404040" stroke-width="1.9" fill="none"/></svg>
<svg class="a" style="left:0;top:0;mix-blend-mode:multiply" width="1059" height="633" viewBox="0 0 1059 633">
<polygon points="739,236 741,233.5 754,232.6 850,233.5 886,234.5 886,249.6 842,249.6 839,247.8 741,247.5 739,246" fill="#ffff00"/>
<polygon points="747,316 843,316 846,319 846,334.6 790,334.6 787,333 747,333" fill="#ffff00"/>
<polygon points="744,353 817,353 818,355 818,367.6 744,367.6" fill="#ffff00"/>
<polygon points="742,371 744,369.2 819.6,369.2 819.6,384.4 742,384.4" fill="#ffff00"/>
<polygon points="738,448.3 836,448.3 836,464.7 738,464.7" fill="#ffff00"/>
<polygon points="746.3,486.3 780,486.5 829,488.5 829,505.8 800,505.5 746.3,503.5" fill="#ffff00"/>
<polygon points="741.8,538 744,535.6 816,535.6 816,545 829.5,545 829.5,570.5 800,570.5 760,569.5 741.8,570.5" fill="#ffff00"/>
<polygon points="741.8,569 760,568.4 849,568.4 849,588 741.8,588" fill="#ffff00"/>
</svg>
<div class="a" style="left:897px;top:626px;width:73px;height:23px;box-sizing:border-box;border:2px solid #0078d7;background:#e1e1e1"></div>
<div class="a" style="left:978px;top:626px;width:73px;height:23px;box-sizing:border-box;border:1px solid #adadad;background:#e1e1e1"></div>
<div class="a" style="left:370.5px;top:202.5px;font-size:103.5px;line-height:120px;font-weight:bold;color:rgba(165,215,171,0.5);letter-spacing:0;transform:scale(1,1.05);transform-origin:0 96px">XSS.is</div>
</body></html>
